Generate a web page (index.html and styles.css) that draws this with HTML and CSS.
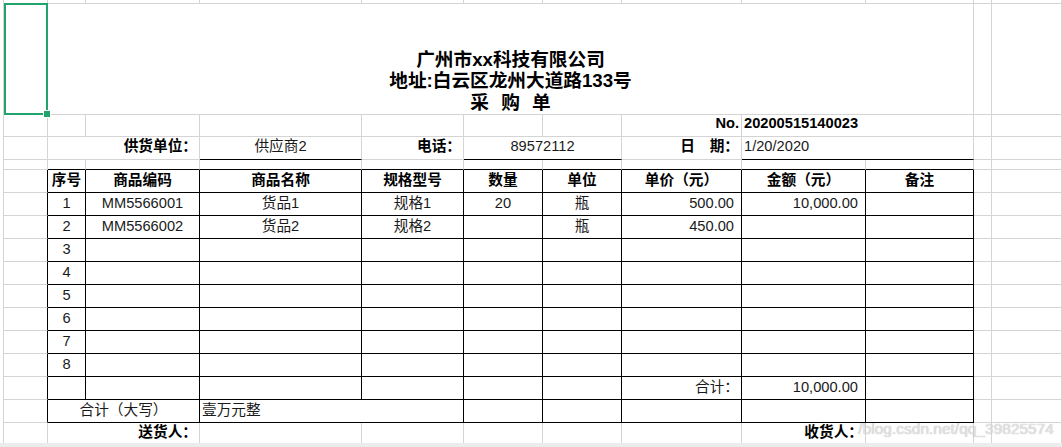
FILE: index.html
```html
<!DOCTYPE html>
<html lang="zh-CN">
<head>
<meta charset="utf-8">
<title>采购单</title>
<link rel="stylesheet" href="styles.css">
</head>
<body>
<div class="sheet">
  <!-- row 0 (partial) -->
  <div class="c"></div><div class="c"></div><div class="c"></div><div class="c"></div><div class="c"></div><div class="c"></div><div class="c"></div><div class="c"></div><div class="c"></div><div class="c"></div><div class="c"></div><div class="c"></div>

  <!-- row 1: title -->
  <div class="c sel"><div class="selbox"><span class="handle"></span></div></div>
  <div class="c title s9">
    <div>广州市xx科技有限公司</div>
    <div>地址:白云区龙州大道路133号</div>
    <div class="spaced">采 购 单</div>
  </div>
  <div class="c"></div><div class="c"></div>

  <!-- row 2 -->
  <div class="c"></div><div class="c"></div><div class="c"></div><div class="c"></div><div class="c"></div><div class="c"></div><div class="c"></div>
  <div class="c rt b up">No.</div>
  <div class="c s2 b up">20200515140023</div>
  <div class="c"></div><div class="c"></div>

  <!-- row 3 -->
  <div class="c"></div>
  <div class="c s2 rt b up">供货单位：</div>
  <div class="c ctr ul up">供应商2</div>
  <div class="c rt b up">电话：</div>
  <div class="c s2 ctr ul up">89572112</div>
  <div class="c rt b up">日　期：</div>
  <div class="c s2 ul up">1/20/2020</div>
  <div class="c"></div><div class="c"></div>

  <!-- row 4 spacer -->
  <div class="c"></div>
  <div class="c tb"></div><div class="c tb"></div><div class="c tb"></div><div class="c tb"></div><div class="c tb"></div><div class="c tb"></div><div class="c tb"></div><div class="c tb"></div><div class="c tb"></div>
  <div class="c"></div><div class="c"></div>

  <!-- header -->
  <div class="c lb"></div>
  <div class="c x ctr b">序号</div>
  <div class="c x ctr b">商品编码</div>
  <div class="c x ctr b">商品名称</div>
  <div class="c x ctr b">规格型号</div>
  <div class="c x ctr b">数量</div>
  <div class="c x ctr b">单位</div>
  <div class="c x ctr b">单价（元）</div>
  <div class="c x ctr b">金额（元）</div>
  <div class="c x ctr b">备注</div>
  <div class="c"></div><div class="c"></div>

  <!-- item 1 -->
  <div class="c lb"></div>
  <div class="c x ctr">1</div>
  <div class="c x ctr">MM5566001</div>
  <div class="c x ctr">货品1</div>
  <div class="c x ctr">规格1</div>
  <div class="c x ctr">20</div>
  <div class="c x ctr">瓶</div>
  <div class="c x rt num">500.00</div>
  <div class="c x rt num">10,000.00</div>
  <div class="c x"></div>
  <div class="c"></div><div class="c"></div>

  <!-- item 2 -->
  <div class="c lb"></div>
  <div class="c x ctr">2</div>
  <div class="c x ctr">MM5566002</div>
  <div class="c x ctr">货品2</div>
  <div class="c x ctr">规格2</div>
  <div class="c x ctr"></div>
  <div class="c x ctr">瓶</div>
  <div class="c x rt num">450.00</div>
  <div class="c x rt num"></div>
  <div class="c x"></div>
  <div class="c"></div><div class="c"></div>

  <!-- items 3-8 -->
  <div class="c lb"></div><div class="c x ctr">3</div><div class="c x"></div><div class="c x"></div><div class="c x"></div><div class="c x"></div><div class="c x"></div><div class="c x"></div><div class="c x"></div><div class="c x"></div><div class="c"></div><div class="c"></div>
  <div class="c lb"></div><div class="c x ctr">4</div><div class="c x"></div><div class="c x"></div><div class="c x"></div><div class="c x"></div><div class="c x"></div><div class="c x"></div><div class="c x"></div><div class="c x"></div><div class="c"></div><div class="c"></div>
  <div class="c lb"></div><div class="c x ctr">5</div><div class="c x"></div><div class="c x"></div><div class="c x"></div><div class="c x"></div><div class="c x"></div><div class="c x"></div><div class="c x"></div><div class="c x"></div><div class="c"></div><div class="c"></div>
  <div class="c lb"></div><div class="c x ctr">6</div><div class="c x"></div><div class="c x"></div><div class="c x"></div><div class="c x"></div><div class="c x"></div><div class="c x"></div><div class="c x"></div><div class="c x"></div><div class="c"></div><div class="c"></div>
  <div class="c lb"></div><div class="c x ctr">7</div><div class="c x"></div><div class="c x"></div><div class="c x"></div><div class="c x"></div><div class="c x"></div><div class="c x"></div><div class="c x"></div><div class="c x"></div><div class="c"></div><div class="c"></div>
  <div class="c lb"></div><div class="c x ctr">8</div><div class="c x"></div><div class="c x"></div><div class="c x"></div><div class="c x"></div><div class="c x"></div><div class="c x"></div><div class="c x"></div><div class="c x"></div><div class="c"></div><div class="c"></div>

  <!-- total -->
  <div class="c lb"></div>
  <div class="c x"></div><div class="c x"></div><div class="c x"></div><div class="c x"></div><div class="c x"></div><div class="c x"></div>
  <div class="c x rt">合计：</div>
  <div class="c x rt num">10,000.00</div>
  <div class="c x"></div>
  <div class="c"></div><div class="c"></div>

  <!-- total in words -->
  <div class="c lb"></div>
  <div class="c x s2 ctr">合计（大写）</div>
  <div class="c x s2">壹万元整</div>
  <div class="c x"></div><div class="c x"></div><div class="c x"></div><div class="c x"></div><div class="c x"></div>
  <div class="c"></div><div class="c"></div>

  <!-- signatures -->
  <div class="c last"></div>
  <div class="c last s2 rt b">送货人：</div>
  <div class="c last"></div><div class="c last"></div><div class="c last"></div><div class="c last"></div><div class="c last"></div>
  <div class="c last rt b">收货人：</div>
  <div class="c last"></div><div class="c last"></div><div class="c last"></div>
</div>
<div class="bar"></div>
<div class="wm">/blog.csdn.net/qq_39825574</div>
</body>
</html>
```

FILE: styles.css
```css
html, body {
  margin: 0;
  padding: 0;
}

body {
  position: relative;
  width: 1062px;
  height: 447px;
  overflow: hidden;
  background: #ffffff;
  font-family: "Liberation Sans", "Noto Sans CJK SC", sans-serif;
  font-size: 14.67px;
  color: #1a1a1a;
}

.sheet {
  display: grid;
  margin-left: 3px;
  border-left: 1px solid #d4d4d4;
  grid-template-columns: 44px 38px 114px 162px 102px 79px 79px 120px 124px 108px 18px 70px;
  grid-template-rows: 4px 111px 22px 23px 10px repeat(11, 23px) 20px;
}

.c {
  box-sizing: border-box;
  display: flex;
  align-items: center;
  min-width: 0;
  padding: 0 2px 2px;
  line-height: 17px;
  white-space: nowrap;
  overflow: hidden;
  border-right: 1px solid #d4d4d4;
  border-bottom: 1px solid #d4d4d4;
}

.c.up { padding-bottom: 4px; }

.c.last {
  border-bottom: none;
}

.s2 { grid-column: span 2; }
.s9 { grid-column: span 9; }

.ctr { justify-content: center; }
.rt { justify-content: flex-end; }
.num { padding-right: 7px; }

.b {
  font-weight: 700;
  color: #000;
}

.x { border-color: #000; }
.lb { border-right-color: #000; }
.tb { border-bottom-color: #000; }
.ul { border-bottom-color: #000; }

.title {
  flex-direction: column;
  justify-content: flex-end;
  align-items: center;
  padding: 0 0 1px;
  font-size: 18.67px;
  line-height: 21.5px;
  font-weight: 700;
  color: #000;
}

.spaced { word-spacing: 7px; }

.sel {
  position: relative;
  overflow: visible;
}

.selbox {
  position: absolute;
  top: -1px;
  left: 0;
  right: -1px;
  bottom: -1px;
  box-sizing: border-box;
  border: 2px solid #20a46b;
  z-index: 2;
}

.handle {
  position: absolute;
  right: -5px;
  bottom: -5px;
  width: 6px;
  height: 6px;
  background: #20a46b;
  border: 1px solid #ffffff;
}

.bar {
  height: 4px;
  background: #ececec;
}

.wm {
  position: absolute;
  right: 8px;
  top: 419px;
  font-family: "Liberation Sans", sans-serif;
  font-size: 15.5px;
  line-height: 20px;
  color: rgba(235, 235, 235, 0.85);
  text-shadow: 0 0 1px rgba(110, 110, 110, 0.6);
  z-index: 3;
}
```
